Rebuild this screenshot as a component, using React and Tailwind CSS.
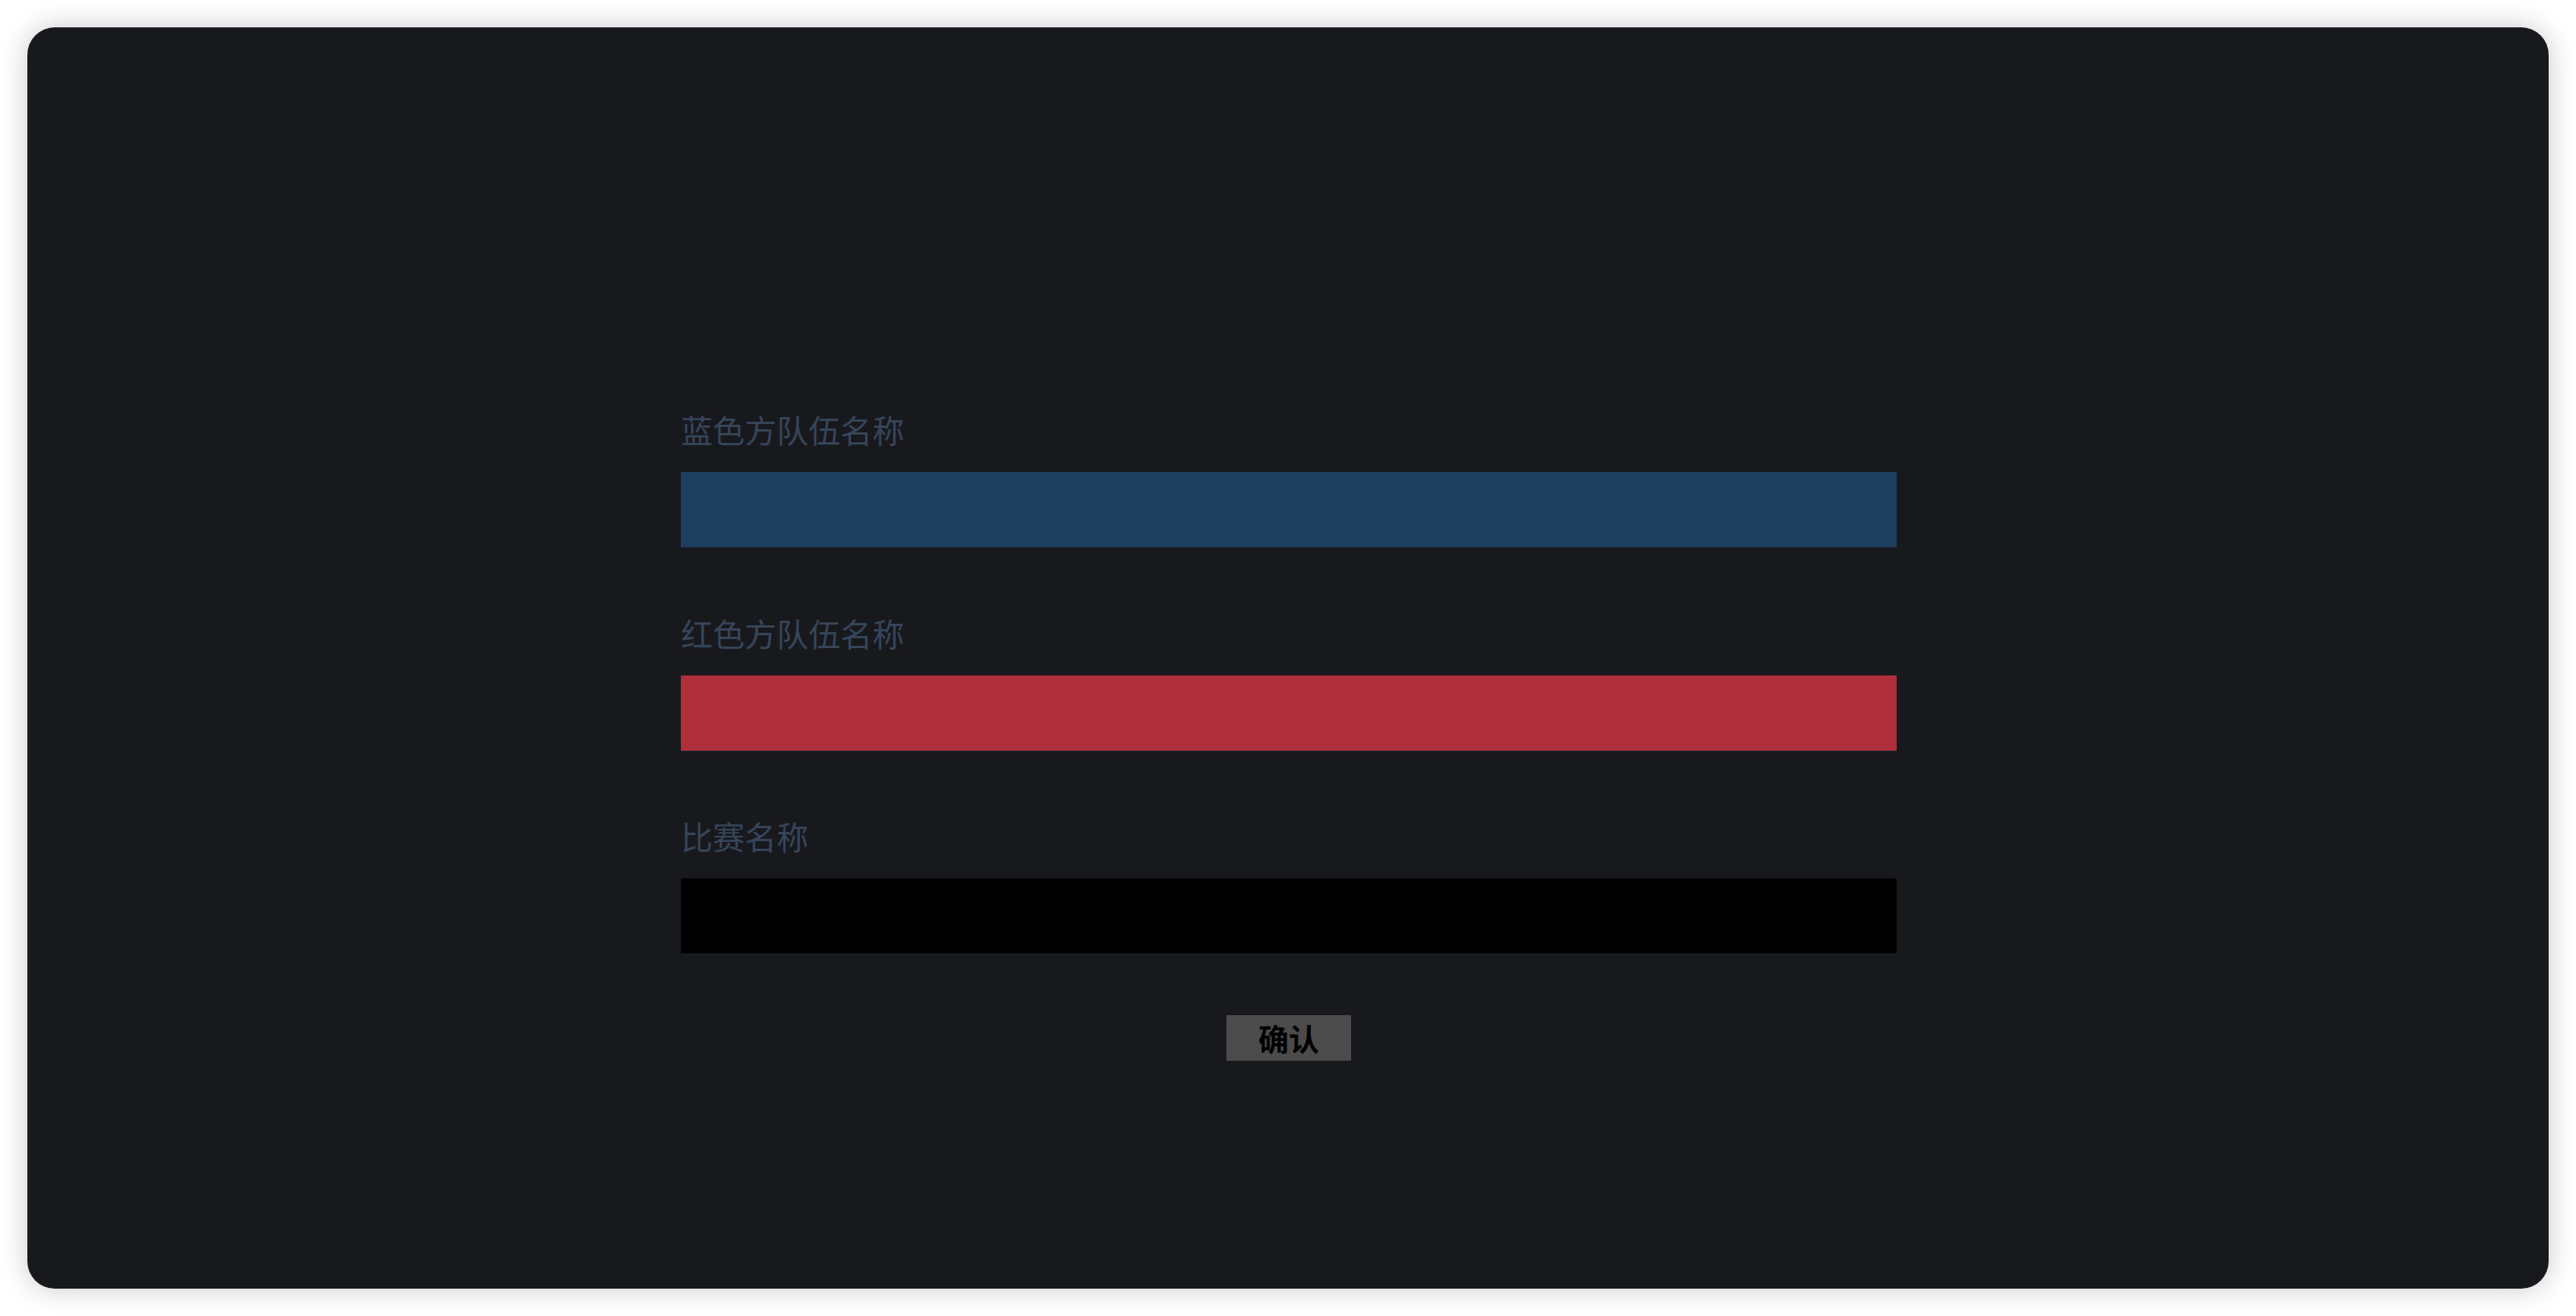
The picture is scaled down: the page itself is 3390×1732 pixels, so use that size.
import React from 'react';

const fields = [
  { label: '蓝色方队伍名称', bg: 'bg-[#1e3f5f]' },
  { label: '红色方队伍名称', bg: 'bg-[#af303b]' },
  { label: '比赛名称', bg: 'bg-black' },
];

export default function App() {
  return (
    <div className="min-h-[1732px] bg-white p-[36px] font-['Noto_Sans_CJK_SC','Noto_Sans',sans-serif]">
      <div className="flex h-[1660px] flex-col items-center rounded-[36px] bg-[#18191d] pt-[500px] shadow-[0_0_36px_rgba(0,0,0,0.22)]">
        <form className="ml-[2px] flex w-[1600px] flex-col" onSubmit={(e) => e.preventDefault()}>
          {fields.map((f) => (
            <label key={f.label} className="mb-[82.5px] flex flex-col">
              <span className="text-[42px] leading-[58px] text-[#364559]">{f.label}</span>
              <input
                type="text"
                className={`mt-[27px] h-[100px] w-full border-b border-[#1d2430] px-4 text-[40px] text-white outline-none ${f.bg}`}
              />
            </label>
          ))}
          <button
            type="submit"
            className="mx-auto -mt-[3px] h-[60px] w-[164px] bg-[#4b4b4b] text-[40px] font-bold leading-none text-black"
          >
            确认
          </button>
        </form>
      </div>
    </div>
  );
}
